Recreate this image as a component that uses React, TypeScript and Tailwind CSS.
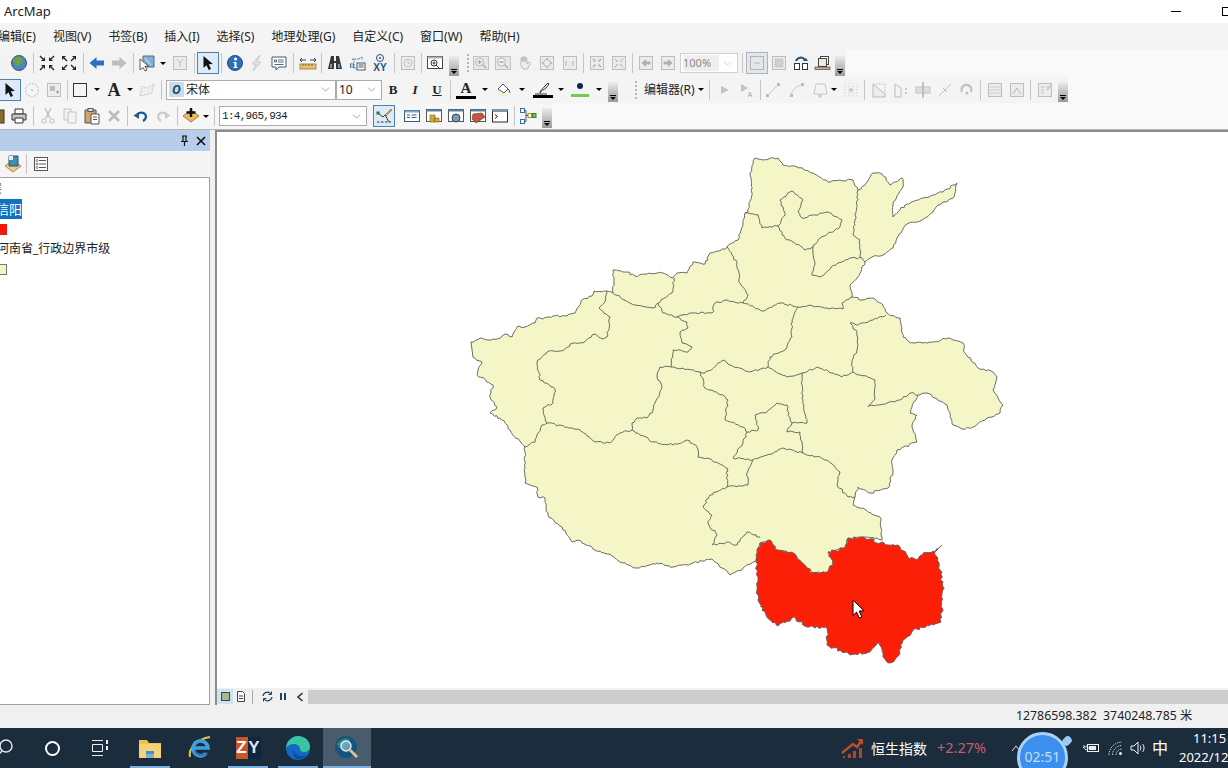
import React from 'react';
import { ChevronDown } from 'lucide-react';

const cjk = { fontFamily: '"Noto Sans","Noto Sans CJK SC",sans-serif' };

// map outlines, in page coordinates, wiggled at run time so the borders look digitised
type P = [number, number];

const wiggle = (pts: P[], seed: number, amp = 0.9, close = false) => {
  let s = seed;
  const rnd = () => {
    s = (s * 16807) % 2147483647;
    return (s % 1000) / 1000 - 0.5;
  };
  let d = `M${pts[0][0]} ${pts[0][1]}`;
  for (let i = 1; i < pts.length; i++) {
    const [x0, y0] = pts[i - 1];
    const [x1, y1] = pts[i];
    const n = Math.max(1, Math.round(Math.hypot(x1 - x0, y1 - y0) / 2.5));
    for (let k = 1; k <= n; k++) {
      const t = k / n;
      const e = k === n ? 0 : amp;
      d += `L${(x0 + (x1 - x0) * t + rnd() * e * 2).toFixed(1)} ${(y0 + (y1 - y0) * t + rnd() * e * 2).toFixed(1)}`;
    }
  }
  return close ? d + 'Z' : d;
};

const red: P[] = [[942, 545], [935, 552], [938, 558], [943, 587], [941, 622], [920, 627], [903, 640], [897, 657], [890, 663], [883, 657], [880, 643], [870, 652], [850, 655], [827, 645], [827, 628], [807, 627], [793, 617], [778, 626], [767, 617], [758, 600], [757, 590], [758, 577], [756, 560], [760, 543], [770, 540], [777, 550], [793, 553], [807, 568], [813, 573], [828, 572], [833, 563], [828, 552], [845, 548], [848, 538], [863, 537], [880, 543], [898, 545], [908, 557], [917, 560], [923, 553], [935, 552]];

const outer: P[] = [[471, 342], [480, 338], [488, 340], [500, 338], [505, 334], [512, 337], [517, 327], [525, 327], [535, 323], [537, 318], [543, 319], [553, 316], [567, 316], [575, 313], [581, 301], [592, 296], [594, 291], [607, 291], [613, 293], [614, 282], [613, 270], [627, 272], [635, 276], [647, 274], [663, 273], [673, 278], [677, 273], [687, 273], [693, 262], [705, 264], [710, 253], [720, 251], [727, 247], [738, 240], [741, 230], [745, 213], [748, 212], [752, 193], [750, 173], [755, 158], [763, 160], [778, 158], [783, 165], [797, 167], [813, 173], [828, 182], [840, 180], [853, 180], [858, 190], [865, 185], [873, 173], [882, 174], [890, 185], [902, 178], [903, 187], [893, 205], [893, 217], [905, 205], [923, 198], [943, 192], [957, 183], [953, 198], [938, 205], [933, 212], [922, 220], [907, 224], [897, 238], [893, 248], [883, 255], [872, 257], [865, 262], [857, 278], [850, 285], [852, 297], [862, 300], [873, 298], [883, 305], [887, 313], [900, 318], [903, 337], [910, 343], [922, 343], [933, 342], [948, 338], [963, 343], [965, 353], [978, 368], [993, 372], [997, 377], [993, 390], [1003, 405], [1000, 413], [987, 418], [973, 427], [962, 429], [953, 425], [947, 405], [935, 398], [927, 393], [918, 395], [912, 407], [910, 413], [917, 415], [912, 427], [917, 442], [897, 450], [892, 460], [893, 472], [888, 488], [870, 493], [858, 487], [855, 497], [853, 505], [880, 517], [882, 540], [863, 537], [848, 538], [845, 548], [828, 552], [833, 563], [828, 572], [813, 573], [807, 568], [793, 553], [777, 550], [770, 540], [760, 543], [757, 560], [743, 568], [730, 575], [722, 568], [712, 559], [693, 563], [673, 567], [657, 563], [637, 568], [620, 562], [607, 554], [595, 550], [578, 540], [572, 542], [562, 527], [548, 515], [545, 498], [538, 497], [537, 487], [525, 483], [525, 447], [510, 430], [502, 420], [490, 413], [497, 407], [490, 397], [493, 385], [477, 375], [482, 362], [473, 357]];

const inner: P[][] = [
  [[607, 291], [605, 302], [599, 308], [610, 317], [607, 337], [603, 339], [595, 334], [582, 343], [573, 343], [560, 351], [547, 352], [537, 362], [540, 380], [555, 389], [553, 403], [543, 408], [545, 420], [547, 423]],
  [[525, 447], [535, 442], [542, 425], [547, 423], [567, 427], [580, 430], [595, 442], [610, 443], [620, 433], [632, 430], [653, 442], [673, 445], [687, 440], [697, 447], [698, 457], [712, 460], [727, 468], [727, 487]],
  [[613, 293], [630, 303], [653, 308], [658, 303], [672, 293], [674, 278]],
  [[658, 303], [663, 313], [677, 317], [687, 322], [688, 328], [680, 332], [682, 343], [692, 347], [688, 352], [673, 350], [671, 367]],
  [[671, 367], [660, 367], [657, 377], [662, 387], [653, 410], [647, 418], [637, 418], [632, 423], [632, 430]],
  [[671, 367], [700, 372], [705, 373], [723, 360], [730, 365], [750, 372], [768, 367], [787, 377], [802, 373], [817, 367], [842, 377], [853, 372]],
  [[677, 317], [682, 315], [693, 313], [712, 313], [715, 303], [727, 300], [743, 303], [763, 311], [780, 303], [797, 307], [810, 305], [827, 308], [843, 309], [842, 303], [852, 297]],
  [[798, 307], [792, 320], [792, 337], [785, 350], [770, 357], [768, 367]],
  [[745, 213], [758, 215], [762, 228], [778, 226], [785, 215], [780, 200], [792, 191], [803, 200], [798, 212], [802, 218], [827, 212], [842, 220], [840, 227], [820, 238], [813, 247], [805, 250], [802, 247], [785, 238], [778, 226]],
  [[813, 247], [815, 263], [812, 275], [820, 277], [838, 263], [850, 258], [862, 258], [865, 262]],
  [[858, 190], [855, 220], [853, 235], [860, 240], [860, 257]],
  [[727, 247], [737, 263], [740, 283], [748, 295], [743, 303]],
  [[886, 315], [873, 320], [858, 325], [850, 323], [857, 332], [857, 350], [852, 360], [853, 372], [875, 380], [875, 397], [868, 407], [877, 405], [900, 400], [910, 393], [918, 395]],
  [[802, 373], [802, 398], [807, 423], [792, 423], [787, 432], [800, 432], [803, 453], [783, 448], [767, 455], [753, 460], [733, 458], [743, 443], [747, 432], [758, 430], [755, 415], [767, 412], [777, 403], [787, 405], [790, 420], [792, 423]],
  [[700, 372], [705, 388], [723, 395], [728, 400], [725, 420], [743, 427], [747, 432]],
  [[753, 460], [747, 473], [748, 485], [727, 487], [710, 495], [703, 507], [712, 515], [708, 523], [717, 535], [712, 545], [728, 542], [737, 545], [747, 532], [760, 537]],
  [[803, 453], [827, 460], [840, 472], [837, 485], [848, 497], [855, 497]],
];

const HenanMap = () => (
  <svg width="1011" height="556" viewBox="217 132 1011 556" className="block">
    <path d={wiggle(outer, 17, 1, true)} fill="#f5f6c8" stroke="#6b6b62" strokeWidth="1" />
    {inner.map((line, i) => (
      <path key={i} d={wiggle(line, 101 + i * 37, 1)} fill="none" stroke="#6b6b62" strokeWidth="1" />
    ))}
    <path d={wiggle(red, 911, 1.5, true)} fill="#fb1f08" stroke="#7a5a52" strokeWidth="1" />
    <path d="M853 600v15.5l3.6-3.4 2.7 6 2.6-1.2-2.7-5.8 4.8-.3z" fill="#fff" stroke="#000" strokeWidth="1" />
  </svg>
);

const G = ({ children }: { children?: React.ReactNode }) => (
  <svg width="18" height="18" viewBox="0 0 18 18" fill="none">
    {children}
  </svg>
);

const Slot = ({ children, className = '' }: { children?: React.ReactNode; className?: string }) => (
  <div className={`flex h-full w-[22px] shrink-0 items-center justify-center ${className}`}>{children}</div>
);

const Sep = ({ className }: { className: string }) => (
  <div className={`flex h-full shrink-0 items-center justify-center ${className}`}>
    <div className="h-[20px] w-px bg-[#c4c4c4]" />
  </div>
);

const Caret = ({ className = 'w-[10px]' }: { className?: string }) => (
  <div className={`flex shrink-0 items-center justify-center ${className}`}>
    <div className="h-0 w-0 border-x-[3px] border-t-[3px] border-x-transparent border-t-black" />
  </div>
);

const Grip = ({ className = '' }: { className?: string }) => (
  <div className={`flex h-[20px] w-[10px] shrink-0 flex-col items-center justify-end self-end bg-gradient-to-b from-[#ececec] to-[#9a9a9a] pb-[2px] ${className}`}>
    <div className="mb-px h-px w-[6px] bg-black" />
    <div className="h-0 w-0 border-x-[3px] border-t-[3px] border-x-transparent border-t-black" />
  </div>
);

const Dots = () => (
  <div className="flex h-[18px] w-[3px] shrink-0 flex-col justify-between">
    {[0, 1, 2, 3, 4].map(i => (
      <div key={i} className="h-[2px] w-[2px] bg-[#b5b5b5]" />
    ))}
  </div>
);

const Active = ({ children, className = 'w-[22px]' }: { children: React.ReactNode; className?: string }) => (
  <div className={`flex h-[22px] shrink-0 items-center justify-center border border-[#4d82ab] bg-[#dcebf7] ${className}`}>
    {children}
  </div>
);

const Combo = ({ className, children }: { className: string; children?: React.ReactNode }) => (
  <div className={`flex h-[20px] shrink-0 items-center border border-[#ababab] bg-white text-[12px] text-[#222] ${className}`} style={cjk}>
    <div className="flex min-w-0 flex-1 items-center">{children}</div>
    <ChevronDown size={13} strokeWidth={1.2} className="mr-[3px] text-[#777]" />
  </div>
);

/* ---- toolbar drawings ---- */
const Pointer = () => (
  <svg width="14" height="16" viewBox="0 0 14 16">
    <path d="M2.5 1v12l3-2.8 2.2 4.8 2.3-1-2.2-4.7 4-.3z" fill="#111" />
  </svg>
);
const Globe = () => (
  <G>
    <circle cx="9" cy="9" r="7.5" fill="#4a86c5" stroke="#45525e" />
    <path d="M5 4c3-2 6-1 7 1s1 3-1 4-2 4-4 3-1-3-3-4-1-3 1-4z" fill="#6fa33f" />
  </G>
);
const Full = ({ out }: { out?: boolean }) => (
  <G>
    {(out
      ? ['M2 2h4L2 6z', 'M16 2h-4l4 4z', 'M2 16h4l-4-4z', 'M16 16h-4l4-4z']
      : ['M7 7H3l4-4z', 'M11 7h4l-4-4z', 'M7 11H3l4 4z', 'M11 11h4l-4 4z']
    ).map(d => (
      <path key={d} d={d} fill="#222" />
    ))}
    <path
      d={out ? 'M7 7L4 4M11 7l3-3M7 11l-3 3M11 11l3 3' : 'M2 2l3 3M16 2l-3 3M2 16l3-3M16 16l-3-3'}
      stroke="#222"
      strokeWidth="1.4"
    />
  </G>
);
const Arrow = ({ left, color }: { left?: boolean; color: string }) => (
  <G>
    <path d={left ? 'M1.5 9L8.5 3v3.5h7.5v5H8.5V15z' : 'M16.5 9L9.5 3v3.5H2v5h7.5V15z'} fill={color} />
  </G>
);
const GrayBox = ({ children }: { children?: React.ReactNode }) => (
  <G>
    <rect x="2.5" y="2.5" width="13" height="13" fill="#ececec" stroke="#bdbdbd" />
    {children}
  </G>
);
const Zoomer = ({ plus }: { plus?: boolean }) => (
  <G>
    <rect x="1.5" y="2.5" width="15" height="13" fill="#e8e8e8" stroke="#c2c2c2" />
    <circle cx="7.5" cy="8" r="4" fill="#f2f2f2" stroke="#b5b5b5" />
    <path d={plus ? 'M5.5 8h4M7.5 6v4M11 11l3 3' : 'M5.5 8h4M11 11l3 3'} stroke="#a8a8a8" strokeWidth="1.3" />
  </G>
);

const Toolbars = () => (
  <div className="shrink-0 bg-[#f9f9f9]">
    {/* menu */}
    <div className="-ml-[2px] flex h-[27px] items-center gap-[17px] bg-[#f5f5f5] text-[12px] text-[#222]" style={cjk}>
      {['编辑(E)', '视图(V)', '书签(B)', '插入(I)', '选择(S)', '地理处理(G)', '自定义(C)', '窗口(W)', '帮助(H)'].map(m => (
        <span key={m}>{m}</span>
      ))}
    </div>

    {/* standard + layout */}
    <div className="flex h-[26px] w-[846px] items-center bg-[#f3f3f3]">
      <div className="h-full w-[8px] shrink-0" />
      <Slot><Globe /></Slot>
      <Sep className="w-[6px]" />
      <Slot><Full /></Slot>
      <Slot><Full out /></Slot>
      <Sep className="w-[6px]" />
      <Slot><Arrow left color="#2a6fc0" /></Slot>
      <Slot><Arrow color="#bdbdbd" /></Slot>
      <Sep className="w-[6px]" />
      <Slot>
        <G>
          <path d="M5 2h11v11H5z" fill="#7fb0d8" stroke="#4e6f8a" />
          <path d="M7 4l6 7" stroke="#e8e8e8" />
          <path d="M2 5v11l3-2.5 2 3.5 2-1-2-3.5 3.5-.5z" fill="#fff" stroke="#333" strokeWidth=".8" />
        </G>
      </Slot>
      <Caret className="w-[10px]" />
      <div className="w-px shrink-0" />
      <Slot><GrayBox><path d="M6 5l3 4 3-4M9 9v4" stroke="#c2c2c2" /></GrayBox></Slot>
      <Sep className="w-[6px]" />
      <Active><Pointer /></Active>
      <Sep className="w-[5px]" />
      <Slot>
        <svg width="18" height="18" viewBox="0 0 18 18">
          <circle cx="9" cy="9" r="7.5" fill="#2e6eb8" stroke="#1f4e86" />
          <circle cx="9.5" cy="5" r="1.5" fill="#fff" />
          <path d="M7.5 8h3v5h1v1h-4v-1h1v-4h-1z" fill="#fff" />
        </svg>
      </Slot>
      <Slot><G><path d="M12 1L4 10h4l-3 7 8-9H9z" fill="#e4e4e4" stroke="#c9c9c9" /></G></Slot>
      <Slot>
        <G>
          <path d="M2 3h14v10H9l-3 3v-3H2z" fill="#fff" stroke="#3f5d73" />
          <path d="M4.5 6h2v2h-2zM8 6h5.5M8 8h5.5M4.5 10.5h9" stroke="#3f5d73" strokeWidth=".9" />
        </G>
      </Slot>
      <Sep className="w-[7px]" />
      <Slot>
        <G>
          <path d="M1 6h6M1 6l2-2M1 6l2 2M17 6h-6M17 6l-2-2M17 6l-2 2" stroke="#1d4d62" />
          <rect x="1" y="10" width="16" height="5" fill="#e6c277" stroke="#a98a42" />
          <path d="M4 10v2M7 10v2M10 10v2M13 10v2" stroke="#8a6d2e" />
        </G>
      </Slot>
      <Sep className="w-[5px]" />
      <Slot>
        <G>
          <path d="M5 2h3v5h2V2h3l3 13h-6V9H8v6H2z" fill="#33363a" />
          <path d="M4 10h2v4H4zM12 10h2v4h-2z" fill="#8c8f93" />
        </G>
      </Slot>
      <div className="w-px shrink-0" />
      <Slot>
        <G>
          <path d="M3 5h7M10 5l3-2M13 3v3M5 5v9M5 14h9" stroke="#3975ae" strokeDasharray="1.5 1" />
          <rect x="1.5" y="10" width="3" height="3" fill="#fff" stroke="#3975ae" />
          <rect x="8" y="9" width="8" height="7" fill="#fff" stroke="#555" />
          <path d="M9.5 11h5M9.5 13h5" stroke="#555" />
        </G>
      </Slot>
      <Slot>
        <div className="flex flex-col items-center leading-none">
          <svg width="10" height="10" viewBox="0 0 10 10">
            <circle cx="5" cy="5" r="3.5" fill="none" stroke="#244f7d" />
            <circle cx="5" cy="5" r="1" fill="#244f7d" />
          </svg>
          <span className="text-[10px] font-bold text-[#244f7d]" style={{ fontFamily: '"Liberation Sans",sans-serif' }}>XY</span>
        </div>
      </Slot>
      <Sep className="w-[6px]" />
      <Slot><GrayBox><circle cx="9" cy="9" r="4" stroke="#c2c2c2" /><path d="M9 6.5V9l2 1" stroke="#c2c2c2" /></GrayBox></Slot>
      <Sep className="w-[5px]" />
      <Slot>
        <G>
          <rect x="1.5" y="2.5" width="15" height="12" fill="#fff" stroke="#444" />
          <path d="M1.5 2.5h15v2h-15z" fill="#a8b3bd" />
          <circle cx="8" cy="9" r="3" fill="#fff" stroke="#333" />
          <path d="M6.5 9h3M8 7.5v3M10 11l4 4" stroke="#333" />
        </G>
      </Slot>
      <div className="w-[3px] shrink-0" />
      <Grip />
      <div className="w-[8px] shrink-0" />
      <Dots />
      <Slot><Zoomer plus /></Slot>
      <Slot><Zoomer /></Slot>
      <Slot><G><path d="M5 8V4h1.5v4-5H8v5-5h1.5v5-4H11v6l2-2 1.5 1-3 6H7L4 10z" fill="#ededed" stroke="#bcbcbc" /></G></Slot>
      <Slot><GrayBox><circle cx="9" cy="9" r="3.5" stroke="#b8b8b8" /><path d="M9 3.5L7.5 5h3zM9 14.5L7.5 13h3zM3.5 9L5 7.5v3zM14.5 9L13 7.5v3z" fill="#b8b8b8" /></GrayBox></Slot>
      <div className="w-px shrink-0" />
      <Slot><GrayBox><path d="M5 7v5M8.5 8v.5M8.5 11v.5M12 7v5" stroke="#b0b0b0" /></GrayBox></Slot>
      <Sep className="w-[5px]" />
      <Slot><GrayBox><path d="M5 5l2.5 2.5M13 5l-2.5 2.5M5 13l2.5-2.5M13 13l-2.5-2.5" stroke="#aaa" strokeWidth="1.4" /></GrayBox></Slot>
      <Slot><GrayBox><path d="M7.5 7.5L5 5M10.5 7.5L13 5M7.5 10.5L5 13M10.5 10.5L13 13" stroke="#aaa" strokeWidth="1.4" strokeDasharray="1.5 1" /></GrayBox></Slot>
      <Sep className="w-[5px]" />
      <Slot><GrayBox><path d="M4.5 9L9 5v2.5h4.5v3H9V13z" fill="#b0b0b0" /></GrayBox></Slot>
      <Slot><GrayBox><path d="M13.5 9L9 5v2.5H4.5v3H9V13z" fill="#b0b0b0" /></GrayBox></Slot>
      <div className="w-px shrink-0" />
      <div className="flex h-[20px] w-[58px] shrink-0 items-center justify-between border border-[#cfcfcf] bg-white pl-[2px] text-[11px] text-[#8a8a8a]" style={cjk}>
        <span className="bg-[#eeeeee] pr-[8px]">100%</span>
        <ChevronDown size={13} strokeWidth={1} className="mr-[3px] text-[#aaa]" />
      </div>
      <Sep className="w-[8px]" />
      <Active className="w-[22px] border-[#a9b5bf] bg-[#e3e7ea]">
        <svg width="16" height="16" viewBox="0 0 16 16" fill="none">
          <rect x="1.5" y="1.5" width="13" height="13" stroke="#b3b3b3" />
          <path d="M5 8h6" stroke="#b3b3b3" />
        </svg>
      </Active>
      <Slot><GrayBox><rect x="5" y="5" width="8" height="8" fill="#d0d0d0" stroke="#b5b5b5" strokeDasharray="1 1" /></GrayBox></Slot>
      <Slot>
        <G>
          <path d="M4 7a5 5 0 0 1 9-1" stroke="#1e4f7a" strokeWidth="2" />
          <path d="M11 7h5l-2-3z" fill="#1e4f7a" />
          <rect x="2.5" y="9.5" width="5" height="6" fill="#fff" stroke="#333" />
          <rect x="10.5" y="9.5" width="5" height="6" fill="#fff" stroke="#333" />
        </G>
      </Slot>
      <Slot>
        <G>
          <rect x="6.5" y="2.5" width="8" height="8" fill="#fff" stroke="#444" />
          <rect x="4.5" y="4.5" width="8" height="8" fill="#e8edd9" stroke="#444" />
          <rect x="1" y="13" width="15" height="2.5" fill="#c9b486" stroke="#444" strokeWidth=".7" />
        </G>
      </Slot>
      <div className="w-px shrink-0" />
      <Grip />
    </div>

    {/* draw + editor */}
    <div className="flex h-[27px] w-[1068px] items-center bg-[#f4f4f4]">
      <Active className="-ml-[1px] w-[22px]"><Pointer /></Active>
      <Slot><G><circle cx="9" cy="9" r="6.5" stroke="#bdbdbd" strokeDasharray="2 1" /><circle cx="9" cy="9" r="1" fill="#bdbdbd" /></G></Slot>
      <Slot><GrayBox><rect x="5" y="5" width="5" height="5" fill="#bdbdbd" /><path d="M11 11h3M12.5 9.5v3" stroke="#999" /></GrayBox></Slot>
      <Sep className="w-[4px]" />
      <Slot><G><rect x="2.5" y="2.5" width="13" height="13" fill="#f4f4f4" stroke="#333" /></G></Slot>
      <Caret className="ml-[3px] w-[6px]" />
      <div className="ml-[3px] flex w-[22px] shrink-0 items-center justify-center text-[18px] font-bold leading-none text-[#222]" style={{ fontFamily: '"Liberation Serif",serif' }}>A</div>
      <Caret className="ml-[2px] w-[6px]" />
      <Slot className="ml-[3px]"><G><path d="M2 15l2-10 5 2 7-4-2 9z" stroke="#c4c4c4" strokeDasharray="2 1" fill="#efefef" /></G></Slot>
      <Sep className="w-[6px]" />
      <Combo className="ml-[2px] w-[170px]">
        <div className="mx-[2px] flex h-[15px] w-[15px] items-center justify-center bg-[#c8dcec] text-[12px] font-bold italic leading-none text-[#1c4a70]">O</div>
        <span>宋体</span>
      </Combo>
      <Combo className="w-[46px]"><span className="ml-[2px]">10</span></Combo>
      <div className="flex w-[66px] shrink-0 items-center text-[13px] font-bold text-[#222]" style={{ fontFamily: '"Liberation Serif",serif' }}>
        <span className="w-[22px] text-center">B</span>
        <span className="w-[22px] text-center italic">I</span>
        <span className="w-[22px] text-center underline">U</span>
      </div>
      <div className="ml-[2px] flex h-full w-[3px] shrink-0 items-center"><div className="h-[20px] w-px bg-[#c4c4c4]" /></div>
      <div className="ml-[3px] flex w-[20px] shrink-0 flex-col items-center leading-none">
        <span className="text-[15px] font-bold text-[#222]" style={{ fontFamily: '"Liberation Serif",serif' }}>A</span>
        <div className="h-[3px] w-full bg-black" />
      </div>
      <Caret className="ml-[4px] w-[10px]" />
      <Slot className="ml-[3px]">
        <G>
          <path d="M3 8l5-5 5 5-4 4z" fill="#fff" stroke="#555" />
          <path d="M9 4l5 5 1 3" stroke="#555" />
          <path d="M3 13h10v2H3z" fill="#f3f0c0" />
        </G>
      </Slot>
      <Caret className="ml-[2px] w-[10px]" />
      <div className="ml-[6px] flex w-[20px] shrink-0 flex-col items-center">
        <svg width="18" height="14" viewBox="0 0 18 14" fill="none">
          <path d="M6 12c0-3 3-4 5-7l3-3 1 1-3 4c-2 2-5 2-6 5z" fill="#fff" stroke="#333" />
          <path d="M1 13h12" stroke="#333" />
        </svg>
        <div className="h-[3px] w-full bg-black" />
      </div>
      <Caret className="ml-[3px] w-[10px]" />
      <div className="ml-[5px] flex w-[18px] shrink-0 flex-col items-center gap-[5px]">
        <div className="h-[6px] w-[6px] rounded-full bg-[#10205f]" />
        <div className="h-[3px] w-full bg-[#6fce4a]" />
      </div>
      <Caret className="ml-[5px] w-[10px]" />
      <Grip className="ml-[4px] mb-[1px]" />
      <div className="w-[17px] shrink-0" />
      <Dots />
      <span className="ml-[6px] w-[53px] shrink-0 whitespace-nowrap text-[12px] text-[#222]" style={cjk}>编辑器(R)</span>
      <Caret className="w-[8px]" />
      <Sep className="w-[8px]" />
      <Slot className="ml-[1px]"><svg width="12" height="12" viewBox="0 0 12 12"><path d="M2 2l8 4-8 4z" fill="#c4c4c4" /></svg></Slot>
      <Slot><svg width="16" height="16" viewBox="0 0 16 16"><path d="M2 2l7 4-7 4z" fill="#c4c4c4" /><path d="M9 15l2-5 2 5M10 13.5h2" stroke="#bbb" fill="none" /></svg></Slot>
      <Sep className="w-[4px]" />
      <Slot><G><path d="M3 15L15 3" stroke="#c8c8c8" /><rect x="2" y="13" width="3" height="3" fill="#bbb" /><rect x="13" y="2" width="3" height="3" fill="#bbb" /></G></Slot>
      <Slot className="ml-[2px]"><G><path d="M3 15C4 8 8 5 15 4" stroke="#c8c8c8" /><rect x="2" y="13" width="3" height="3" fill="#bbb" /><rect x="13" y="2" width="3" height="3" fill="#bbb" /></G></Slot>
      <Slot className="ml-[1px]"><G><path d="M5 3h9l2 10H3z" stroke="#c8c8c8" /><path d="M9 13v4M7 15h4" stroke="#bbb" /></G></Slot>
      <Caret className="-ml-[1px] w-[7px]" />
      <Slot className="ml-[3px]"><G>{[3, 7, 11, 15].map(x => <path key={x} d={`M${x} 2v14`} stroke="#d2d2d2" strokeDasharray="1.5 1.5" />)}<circle cx="9" cy="9" r="2" fill="#c8c8c8" /></G></Slot>
      <Sep className="w-[4px]" />
      <Slot className="ml-[2px]"><G><path d="M3 3l12 10v3H3z" fill="#ececec" stroke="#bdbdbd" /><path d="M3 3h12v13" stroke="#bdbdbd" strokeDasharray="1.5 1.5" /></G></Slot>
      <Slot><G><path d="M3 3l6 4v9" stroke="#bbb" /><path d="M3 3v13h6" stroke="#bbb" /><path d="M13 8h2M13 12h2" stroke="#c9c9c9" strokeWidth="2" /></G></Slot>
      <Slot><G><rect x="2" y="6" width="14" height="6" fill="#dedede" stroke="#c4c4c4" /><path d="M9 1v16" stroke="#b5b5b5" strokeWidth="1.6" /></G></Slot>
      <Slot><G><path d="M3 15L15 3" stroke="#c8c8c8" /><path d="M7 7l4 4" stroke="#bbb" /></G></Slot>
      <Slot><G><path d="M4 11a5 5 0 1 1 9 0" stroke="#c2c2c2" strokeWidth="2.4" /><circle cx="9" cy="12" r="1.5" fill="#bbb" /></G></Slot>
      <Sep className="w-[4px]" />
      <Slot className="ml-[2px]"><GrayBox><path d="M2.5 6h13M2.5 9h13M2.5 12h13" stroke="#cdcdcd" /></GrayBox></Slot>
      <Slot><GrayBox><path d="M5 13l4-6 4 6" stroke="#b5b5b5" /></GrayBox></Slot>
      <Sep className="w-[4px]" />
      <Slot className="ml-[2px]"><GrayBox><path d="M5 6h3M5 9h3M5 12h3M10 6h3" stroke="#bdbdbd" /><path d="M11 9l5-6" stroke="#c9c9c9" strokeWidth="1.5" /></GrayBox></Slot>
      <Grip className="ml-[2px] mb-[1px]" />
    </div>

    {/* standard lower row */}
    <div className="flex h-[26px] w-[552px] items-center bg-[#f6f6f6]">
      <Slot className="-ml-[14px]"><G><rect x="2" y="3" width="14" height="13" fill="#8a6f2a" stroke="#333" /></G></Slot>
      <Slot>
        <G>
          <path d="M5 2h8v5H5z" fill="#fff" stroke="#333" />
          <path d="M2 7h14v6H2z" fill="#c7c7c7" stroke="#333" />
          <path d="M5 11h8v5H5z" fill="#fff" stroke="#333" />
        </G>
      </Slot>
      <Sep className="w-[6px]" />
      <Slot className="ml-[1px]"><G><path d="M6 1l5 10M12 1L7 11" stroke="#bdbdbd" strokeWidth="1.4" /><circle cx="5" cy="14" r="2.2" stroke="#bdbdbd" /><circle cx="13" cy="14" r="2.2" stroke="#bdbdbd" /></G></Slot>
      <Slot><G><path d="M3 2h7v11H3z" fill="#f3f3f3" stroke="#c2c2c2" /><path d="M7 5h8v11H7z" fill="#f3f3f3" stroke="#c2c2c2" /></G></Slot>
      <Slot>
        <G>
          <path d="M2 3h11v13H2z" fill="#c9a86a" stroke="#555" />
          <rect x="5" y="1.5" width="5" height="3" fill="#e4e4e4" stroke="#555" />
          <path d="M8 7h8v10H8z" fill="#fff" stroke="#555" />
          <path d="M10 10h4M10 12.5h4" stroke="#555" />
        </G>
      </Slot>
      <Slot><G><path d="M4 4l10 10M14 4L4 14" stroke="#bcbcbc" strokeWidth="2.6" /></G></Slot>
      <Sep className="w-[5px]" />
      <Slot><G><path d="M5 8a5 5 0 0 1 9 1c0 2-1 4-3 5" stroke="#1f5a94" strokeWidth="2.2" /><path d="M1.5 8.5L7 5v7z" fill="#1f5a94" /></G></Slot>
      <Slot><G><path d="M13 8a5 5 0 0 0-9 1c0 2 1 4 3 5" stroke="#cccccc" strokeWidth="2.2" /><path d="M16.5 8.5L11 5v7z" fill="#cccccc" /></G></Slot>
      <Sep className="w-[6px]" />
      <Slot>
        <G>
          <path d="M9 3l8 6-8 6-8-6z" fill="#e9b968" stroke="#a87f33" />
          <path d="M9 1v9M4.5 5.5h9" stroke="#111" strokeWidth="2.4" />
        </G>
      </Slot>
      <Caret className="-ml-[1px] w-[9px]" />
      <div className="w-[4px] shrink-0" />
      <div className="mr-[2px] flex h-full w-[3px] items-center"><div className="h-[20px] w-px bg-[#c4c4c4]" /></div>
      <Combo className="w-[148px]">
        <span className="ml-[2px] tracking-[-0.7px]" style={{ fontFamily: '"Liberation Mono",monospace', fontSize: 11 }}>1:4,965,934</span>
      </Combo>
      <div className="w-[6px] shrink-0" />
      <Active>
        <svg width="18" height="18" viewBox="0 0 18 18" fill="none">
          <path d="M2 15h14" stroke="#333" strokeDasharray="2.5 1.5" />
          <path d="M3 6l5 4 2-2 4 7" stroke="#333" />
          <path d="M10 8l6-6 1 1-6 6z" fill="#d9b04c" stroke="#7a6020" strokeWidth=".6" />
          <rect x="1.5" y="4.5" width="3" height="3" fill="#2f6a2f" />
        </svg>
      </Active>
      <div className="w-[6px] shrink-0" />
      <Slot><G><rect x="1.5" y="3.5" width="15" height="11" fill="#fff" stroke="#2f5f88" /><path d="M1.5 3.5h15v2h-15z" fill="#7da8cc" /><path d="M4 8h3M4 10.5h3M8.5 8h5M8.5 10.5h5" stroke="#2f5f88" /></G></Slot>
      <Slot><G><rect x="1.5" y="2.5" width="15" height="12" fill="#fff" stroke="#555" /><path d="M1.5 2.5h15v2h-15z" fill="#5d83a6" /><path d="M5 8h5v7H5zM9 11h5v4H9z" fill="#d3ab2e" stroke="#7a6020" strokeWidth=".6" /></G></Slot>
      <Slot><G><rect x="1.5" y="2.5" width="15" height="12" fill="#fff" stroke="#555" /><path d="M1.5 2.5h15v2h-15z" fill="#5d83a6" /><circle cx="9" cy="11" r="4" fill="#6b9dbe" stroke="#444" /></G></Slot>
      <Slot><G><rect x="1.5" y="2.5" width="15" height="12" fill="#fff" stroke="#555" /><path d="M1.5 2.5h15v2h-15z" fill="#5d83a6" /><path d="M4 7l9-1 3 4-9 6-4-4z" fill="#c4563f" stroke="#7d2a1c" strokeWidth=".6" /></G></Slot>
      <Slot><G><rect x="1.5" y="3" width="15" height="12" fill="#fff" stroke="#2b2b2b" /><path d="M1.5 3h15v2h-15z" fill="#7f99b0" /><path d="M4 7.5L6.5 9.5 4 11.5" stroke="#222" /></G></Slot>
      <Sep className="w-[6px]" />
      <Slot>
        <G>
          <rect x="1.5" y="1.5" width="4" height="4" fill="#fff" stroke="#2d6fa8" />
          <rect x="1.5" y="12.5" width="4" height="4" fill="#fff" stroke="#2d6fa8" />
          <rect x="9" y="6.5" width="3.5" height="4" fill="#fff" stroke="#b58a2a" />
          <rect x="13.5" y="6.5" width="3.5" height="4" fill="#7fbf5a" stroke="#3d7d2a" />
          <path d="M5.5 3.5H7v5h2M5.5 14.5H7v-6" stroke="#555" />
        </G>
      </Slot>
      <Grip className="ml-[3px] mb-[1px]" />
    </div>
  </div>
);

const TocPanel = () => (
  <div className="flex h-full w-[210px] shrink-0 flex-col bg-[#f5f5f5]">
    <div className="flex h-[21px] shrink-0 items-center justify-end bg-[#b6cee9] pr-[3px]">
      <svg width="12" height="12" viewBox="0 0 12 12" fill="none" className="mr-[5px]">
        <path d="M4 1h5M5 1v5M8 1v5M3 6.5h7M6.5 6.5V11" stroke="#111" strokeWidth="1.2" />
      </svg>
      <svg width="12" height="12" viewBox="0 0 12 12" fill="none">
        <path d="M2 2l8 8M10 2l-8 8" stroke="#111" strokeWidth="1.6" />
      </svg>
    </div>
    <div className="flex h-[26px] shrink-0 items-center">
      <div className="ml-[3px] flex w-[20px] justify-center">
        <svg width="20" height="20" viewBox="0 0 20 20">
          <path d="M2 12l8-6 8 6-8 6z" fill="#f0c98a" stroke="#b28a48" />
          <path d="M6 2h9v10H6z" fill="#3d8fb0" stroke="#24566c" />
          <path d="M6 2h4v4H6z" fill="#e4eef2" />
        </svg>
      </div>
      <div className="ml-[3px] h-[20px] w-px bg-[#c4c4c4]" />
      <div className="ml-[4px] flex w-[20px] justify-center">
        <svg width="14" height="14" viewBox="0 0 14 14" fill="none">
          <rect x=".5" y=".5" width="13" height="13" fill="#fff" stroke="#555" />
          <path d="M5 3.5h7M5 7h7M5 10.5h7" stroke="#555" />
          <circle cx="3" cy="3.5" r="1" stroke="#555" strokeWidth=".7" />
          <circle cx="3" cy="7" r="1" stroke="#555" strokeWidth=".7" />
          <circle cx="3" cy="10.5" r="1" stroke="#555" strokeWidth=".7" />
        </svg>
      </div>
    </div>
    <div className="flex flex-1 flex-col overflow-hidden border-y border-r border-[#a0a0a0] bg-white text-[12px] text-[#222]" style={cjk}>
      <div className="mt-[2px] h-[18px] -translate-x-[10px] leading-[18px] text-[#555]">层</div>
      <div className="mt-[1px] flex h-[20px] w-[22px] items-center overflow-hidden bg-[#0f72c2] text-[13px] leading-none text-white">
        <span className="-ml-[4px] whitespace-nowrap">信阳</span>
      </div>
      <div className="mt-[5px] h-[11px] w-[7px] bg-[#f2180c]" />
      <div className="-ml-[3px] mt-[5px] h-[17px] leading-[17px]">河南省_行政边界市级</div>
      <div className="mt-[7px] h-[11px] w-[7px] border-y border-r border-[#777] bg-[#f4f5c6]" />
    </div>
  </div>
);

const MapFrame = () => (
  <div className="ml-[5px] flex h-full min-w-0 flex-1 flex-col">
    <div className="h-[558px] shrink-0 overflow-hidden border-l-2 border-t-2 border-[#8c8c8c] bg-white">
      <HenanMap />
    </div>
    <div className="flex h-[17px] shrink-0 items-center border-l-2 border-[#8c8c8c] bg-[#f0f0f0]">
      <div className="flex h-[15px] w-[16px] items-center justify-center bg-[#cfe2f3]">
        <div className="h-[9px] w-[9px] border border-[#444] bg-[#a4b98c]" />
      </div>
      <div className="flex w-[16px] justify-center">
        <svg width="10" height="11" viewBox="0 0 10 11" fill="none">
          <path d="M1.5.5h5l2 2v8h-7z" fill="#fff" stroke="#444" />
          <path d="M3 5h4M3 7.5h4" stroke="#444" />
        </svg>
      </div>
      <div className="ml-[3px] h-[14px] w-px bg-[#aaa]" />
      <div className="ml-[7px] flex w-[14px] justify-center">
        <svg width="11" height="11" viewBox="0 0 11 11" fill="none">
          <path d="M1 5a4.5 4.5 0 0 1 8-2M10 6a4.5 4.5 0 0 1-8 2" stroke="#23405c" strokeWidth="1.2" />
          <path d="M9.5.5v3h-3M1.5 10.5v-3h3" stroke="#23405c" />
        </svg>
      </div>
      <div className="ml-[2px] flex w-[14px] justify-center gap-[2px]">
        <div className="h-[7px] w-[2px] bg-[#23405c]" />
        <div className="h-[7px] w-[2px] bg-[#23405c]" />
      </div>
      <div className="ml-[3px] flex w-[14px] justify-center">
        <svg width="8" height="10" viewBox="0 0 8 10" fill="none">
          <path d="M6.5 1L2 5l4.500 4" stroke="#333" strokeWidth="1.6" />
        </svg>
      </div>
      <div className="ml-[1px] h-[14px] flex-1 bg-[#cdcdcd]" />
    </div>
  </div>
);

const TaskSlot = ({ children, bar, active }: { children: React.ReactNode; bar?: boolean; active?: boolean }) => (
  <div className={`relative flex h-[40px] w-[48px] shrink-0 items-center justify-center ${active ? 'bg-[#4a5c6b]' : ''}`}>
    {children}
    {bar && <div className={`absolute bottom-0 h-[2px] bg-[#78aee0] ${active ? 'inset-x-0' : 'inset-x-[4px]'}`} />}
  </div>
);

const Taskbar = () => (
  <div className="relative flex h-[40px] shrink-0 items-center bg-[#1b2c3d] text-white">
    <div className="-ml-[19px] flex">
      <TaskSlot>
        <svg width="18" height="18" viewBox="0 0 18 18" fill="none">
          <circle cx="10" cy="7" r="6" stroke="#e8e8e8" strokeWidth="1.4" />
          <path d="M6 12l-5 5" stroke="#e8e8e8" strokeWidth="1.4" />
        </svg>
      </TaskSlot>
      <div className="-ml-px"><TaskSlot><div className="h-[15px] w-[15px] rounded-full border-2 border-white" /></TaskSlot></div>
      <TaskSlot>
        <svg width="18" height="18" viewBox="0 0 18 18" fill="none">
          <path d="M1 1.5h11M1 16.5h11M1.5 5.5h10v7h-10z" stroke="#eee" />
          <path d="M15 1h2v4h-2zM15 7h2v4h-2z" fill="#eee" />
        </svg>
      </TaskSlot>
    </div>
    <div className="ml-[2px] flex">
      <TaskSlot bar>
        <svg width="24" height="22" viewBox="0 0 24 22">
          <path d="M1 3h8l2 3h12v15H1z" fill="#efc14f" />
          <path d="M1 7h22v14H1z" fill="#f5d27a" />
          <path d="M8 14h8v3H8z" fill="#4d8fc0" />
          <path d="M8 17h8v4H8z" fill="#7eb0cf" />
        </svg>
      </TaskSlot>
      <div className="w-[2px]" />
      <TaskSlot>
        <svg width="26" height="24" viewBox="0 0 26 24" fill="none">
          <path d="M3 21C1 13 10 3 23 1" stroke="#e3c04c" strokeWidth="2" />
          <path d="M6 12h15a7.5 7.5 0 1 0-2 5.5" stroke="#3f9fdc" strokeWidth="3.6" />
          <path d="M8 15c1 4 8 6 12 2" stroke="#2c79c0" strokeWidth="2" />
        </svg>
      </TaskSlot>
      <TaskSlot bar>
        <div className="flex h-[22px] w-[25px] items-stretch text-[17px] font-bold leading-[22px]" style={{ fontFamily: '"Liberation Sans",sans-serif' }}>
          <span className="w-[12px] bg-[#c9552b] text-center">Z</span>
          <span className="w-[13px] bg-[#10233f] text-center text-[#dfe7ef]">Y</span>
        </div>
      </TaskSlot>
      <div className="w-[2px]" />
      <TaskSlot bar>
        <svg width="26" height="26" viewBox="0 0 26 26">
          <circle cx="13" cy="13" r="12" fill="#1668c6" />
          <path d="M1 13C2 5 8 1 13 1c7 0 12 5 12 11 0 3-3 5-6 5-2 0-4-1-4-3 0-3-3-5-6-5-4 0-7 2-8 4z" fill="#38c6a2" />
          <path d="M9 14c0 4 3 7 7 7 2 0 4-.5 6-2-2 4-6 6-10 5C9 23 7 18 9 14z" fill="#0c4fa0" />
        </svg>
      </TaskSlot>
      <div className="w-px" />
      <TaskSlot bar active>
        <svg width="26" height="26" viewBox="0 0 26 26" fill="none">
          <circle cx="12" cy="12" r="11" fill="#17557f" />
          <path d="M3 9c3-5 8-6 11-5s2 4-1 5-2 5-5 5-3-3-5-5z" fill="#2f8f7a" />
          <circle cx="12" cy="11" r="5" fill="#7fb6d8" fillOpacity=".75" stroke="#e8e8e8" strokeWidth="1.4" />
          <path d="M16 15l7 7" stroke="#d8c48c" strokeWidth="2.8" />
        </svg>
      </TaskSlot>
    </div>

    <div className="ml-[469px] flex items-center">
      <svg width="24" height="24" viewBox="0 0 24 24" fill="none">
        <path d="M2 17L13 8l4 3 5-7" stroke="#c64a2c" strokeWidth="2.4" />
        <path d="M17 3h6v6z" fill="#c64a2c" />
        <path d="M3 20h2v2H3zM8 18h3v4H8zM13 15h3v7h-3zM19 12h3v10h-3z" fill="#a8492f" />
      </svg>
    </div>
    <span className="ml-[7px] w-[57px] shrink-0 whitespace-nowrap text-[14px]" style={cjk}>恒生指数</span>
    <span className="ml-[9px] w-[50px] shrink-0 text-[14.5px] text-[#c4606a]" style={cjk}>+2.27%</span>
    <svg width="10" height="8" viewBox="0 0 10 8" fill="none" className="ml-[24px] shrink-0">
      <path d="M1 7l4-5 4 5" stroke="#ddd" />
    </svg>
    <svg width="16" height="10" viewBox="0 0 16 10" fill="none" className="ml-[62px] shrink-0">
      <rect x="4.5" y="1.5" width="11" height="7" stroke="#eee" />
      <path d="M1 2v2M4 2v2M0 4h5v2l-2 1z" stroke="#eee" strokeWidth=".8" />
      <rect x="6" y="3" width="7" height="4" fill="#eee" />
    </svg>
    <svg width="15" height="15" viewBox="0 0 15 15" fill="none" className="ml-[9px] shrink-0">
      <path d="M1 14C1 7 7 1 14 1M4.5 14c0-5 4-9.5 9.5-9.5M8 14c0-3 2.5-6 6-6" stroke="#c8ccd0" strokeDasharray="1.5 1" />
      <circle cx="12.5" cy="12.5" r="1.5" fill="#eee" />
    </svg>
    <svg width="15" height="14" viewBox="0 0 15 14" fill="none" className="ml-[7px] shrink-0">
      <path d="M1 5h3l4-4v12L4 9H1z" stroke="#eee" />
      <path d="M10 4.5c1 1.5 1 3.5 0 5M12.5 3c2 2 2 6 0 8" stroke="#eee" />
    </svg>
    <span className="ml-[7px] w-[17px] shrink-0 text-[16px]" style={cjk}>中</span>
    <div className="ml-[10px] flex w-[70px] shrink-0 flex-col text-[13px] leading-[19px]" style={cjk}>
      <span className="pl-[14px]">11:15</span>
      <span className="whitespace-nowrap">2022/12/</span>
    </div>

    {/* recording timer floating over the tray */}
    <div className="absolute left-[1017px] top-[4px] flex h-[51px] w-[51px] items-start justify-center rounded-full border-[3px] border-[#a9d2f7] bg-[#3d8fee] pt-[12px] text-[14px] leading-[20px] text-[#bfe0fb]" style={cjk}>
      02:51
    </div>
    <div className="absolute left-[1063px] top-[8px] h-[10px] w-[8px] rotate-45 rounded-sm bg-[#9dc9f3]" />
  </div>
);

export default function App() {
  return (
    <div className="relative flex h-[768px] w-[1228px] flex-col overflow-hidden bg-white">
      <div className="flex h-[23px] shrink-0 items-center bg-white pl-[4px] text-[13px] text-[#222]" style={{ fontFamily: '"Noto Sans",sans-serif' }}>
        <span>ArcMap</span>
        <div className="ml-auto mr-[41px] h-px w-[10px] bg-black" />
        <div className="-mr-[4px] h-[9px] w-[10px] border border-black" />
      </div>
      <Toolbars />
      <div className="flex h-[576px] shrink-0 border-t border-[#b5b5b5] bg-[#f0f0f0]">
        <TocPanel />
        <MapFrame />
      </div>
      <div className="flex h-[23px] shrink-0 items-center bg-[#f0f0f0] pl-[1016px] text-[12.3px] text-[#222]" style={cjk}>
        <span className="whitespace-pre">12786598.382  3740248.785 米</span>
      </div>
      <Taskbar />
    </div>
  );
}
